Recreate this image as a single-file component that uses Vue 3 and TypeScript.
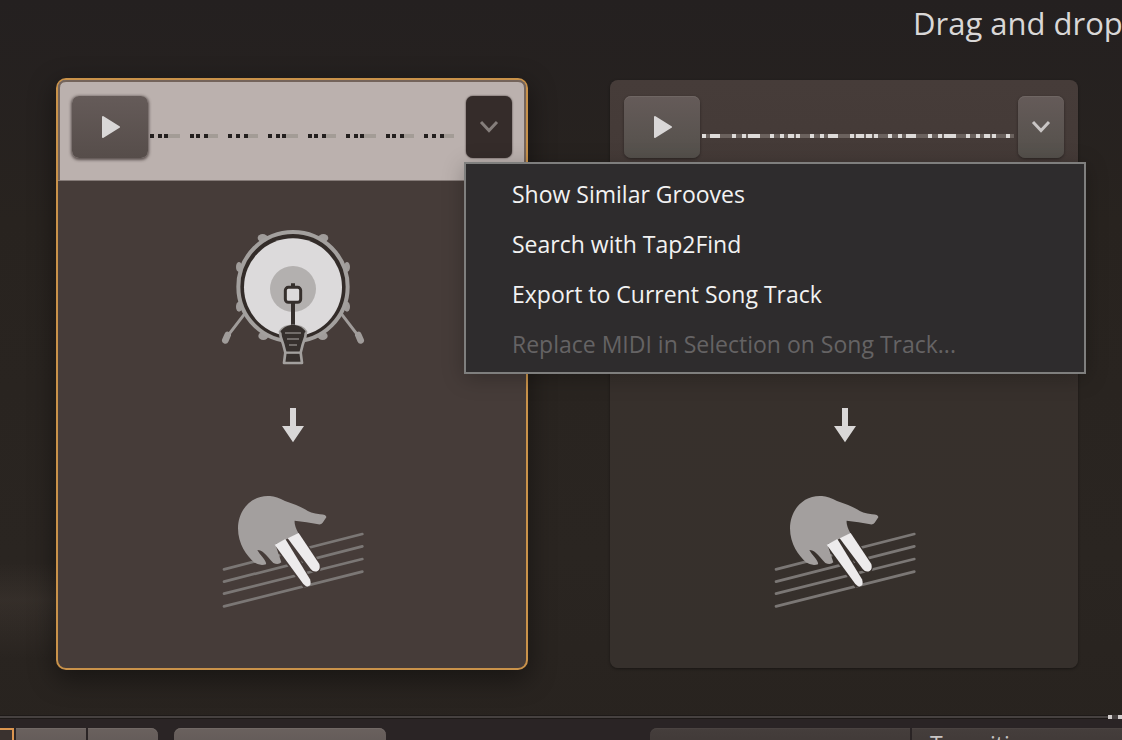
<script setup lang="ts">
import { ref } from 'vue'

type Span = [start: number, width: number]

interface Groove {
  id: string
  selected: boolean
  notes: Span[]
  tails: Span[]
}

const grooves: Groove[] = [
  {
    id: 'groove-1',
    selected: true,
    notes: [2, 10, 16, 42, 48, 56, 80, 88, 96, 120, 128, 134, 160, 166, 174, 198, 206, 212, 238, 244, 252, 276, 284, 292]
      .map((x): Span => [x, 4]),
    tails: [[20, 12], [60, 10], [100, 10], [138, 12], [178, 10], [216, 12], [256, 10], [296, 10]],
  },
  {
    id: 'groove-2',
    selected: false,
    notes: [
      [2, 4], [10, 10], [32, 4], [42, 4], [48, 12], [70, 4], [80, 4], [88, 6], [96, 4],
      [110, 4], [120, 4], [128, 10], [150, 4], [156, 8], [166, 6], [174, 4], [188, 4],
      [198, 4], [206, 10], [228, 4], [238, 4], [244, 12], [266, 4], [276, 4], [284, 6],
      [292, 4], [306, 4],
    ],
    tails: [[2, 312]],
  },
]

const openMenu = ref<string | null>('groove-1')

const menuItems = [
  { label: 'Show Similar Grooves', disabled: false },
  { label: 'Search with Tap2Find', disabled: false },
  { label: 'Export to Current Song Track', disabled: false },
  { label: 'Replace MIDI in Selection on Song Track...', disabled: true },
]

function toggleMenu(id: string) {
  openMenu.value = openMenu.value === id ? null : id
}
</script>

<template>
  <div class="app">
    <h1 class="hint">Drag and drop</h1>

    <main class="cards">
      <article v-for="g in grooves" :key="g.id" class="card" :class="{ selected: g.selected }">
        <header class="card-head">
          <button class="btn play" type="button" aria-label="Play">
            <svg width="20" height="24" viewBox="0 0 20 24">
              <path d="M3 2 L19 12 L3 22 Z" fill="#d9d7d7" stroke="#d9d7d7" stroke-width="2" stroke-linejoin="round" />
            </svg>
          </button>
          <svg class="notes" height="62">
            <rect v-for="(t, i) in g.tails" :key="'t' + i" class="tail" :x="t[0]" y="38" :width="t[1]" height="4" />
            <rect v-for="(n, i) in g.notes" :key="'n' + i" class="note" :x="n[0]" y="38" :width="n[1]" height="4" />
          </svg>
          <div class="menu-anchor">
            <button
              class="btn more"
              type="button"
              aria-label="Groove options"
              :aria-expanded="openMenu === g.id"
              :class="{ pressed: openMenu === g.id }"
              @click="toggleMenu(g.id)"
            >
              <svg width="22" height="14" viewBox="0 0 22 14">
                <path d="M3 2 L11 10.500 L19 2" fill="none" stroke="currentColor" stroke-width="3" />
              </svg>
            </button>
            <div v-if="openMenu === g.id" class="menu" role="menu">
              <button
                v-for="m in menuItems"
                :key="m.label"
                class="menu-item"
                type="button"
                role="menuitem"
                :disabled="m.disabled"
              >
                {{ m.label }}
              </button>
            </div>
          </div>
        </header>

        <div class="flow">
          <svg class="drum" width="170" height="155" viewBox="-9 0 510 465">
            <g fill="#a09c9a">
              <ellipse cx="158" cy="54" rx="15" ry="12" />
              <ellipse cx="340" cy="54" rx="15" ry="12" />
              <ellipse cx="87" cy="141" rx="9" ry="15" />
              <ellipse cx="411" cy="141" rx="9" ry="15" />
              <ellipse cx="87" cy="260" rx="9" ry="15" />
              <ellipse cx="411" cy="260" rx="9" ry="15" />
              <ellipse cx="160" cy="348" rx="15" ry="12" />
              <ellipse cx="338" cy="348" rx="15" ry="12" />
            </g>
            <g stroke="#a09c9a" stroke-linecap="round">
              <path d="M102 284 L56 344 M396 284 L442 344" stroke-width="9" />
              <path d="M53 345 L46 361 M445 345 L452 361" stroke-width="20" />
            </g>
            <circle cx="249" cy="200" r="158" fill="#332c29" />
            <circle cx="249" cy="200" r="164" fill="none" stroke="#a3a09e" stroke-width="12" />
            <circle cx="249" cy="202" r="147" fill="#dcdadb" />
            <circle cx="249" cy="207" r="69" fill="#b3b0af" />
            <path d="M249 190 V204 M249 248 V322" stroke="#36302d" stroke-width="12" />
            <rect x="226" y="202" width="46" height="45" rx="9" fill="#dcdadb" stroke="#36302d" stroke-width="9" />
            <path
              d="M210 335 C225 312 273 312 288 335 L286 350 Q277 374 272 398 L276 429 H222 L226 398 Q221 374 212 350 Z"
              fill="#36302d" stroke="#a3a09e" stroke-width="8" stroke-linejoin="round"
            />
            <path d="M211 336 C225 308 273 308 287 336 L270 344 H228 Z" fill="#36302d" />
            <path d="M226 398 H272" stroke="#a3a09e" stroke-width="7" />
            <path d="M225 339 H273 M231 357 H267 M237 375 H261" stroke="#85807e" stroke-width="5" />
          </svg>

          <svg class="arrow" width="170" height="50" viewBox="-9 0 510 150">
            <path d="M240 24 H258 V78 H282 L249 127 L216 78 H240 Z" fill="#d9d7d7" />
          </svg>

          <svg class="hand" width="170" height="140" viewBox="-9 240 510 420">
            <path
              d="M42 508 L457 402 M42 545 L457 439 M42 581 L457 477 M42 619 L457 515"
              stroke="#7b7775" stroke-width="8" stroke-linecap="round"
            />
            <g class="cutout">
              <path d="M194 433 L266 400 L327 494 Q330 512 316 516 L300 506 L240 430 L300 545 L282 557 Z" />
              <path d="M140 452 L168 492 L190 488 L150 448 Z" />
            </g>
            <path
              d="M180 288 C124 284 84 330 84 385 C84 432 110 467 132 487 Q150 499 168 493 C171 482 150 466 142 450 C158 450 166 463 190 489 Q205 496 214 487 L196 433 L266 401 Q252 376 254 362 Q290 365 325 373 Q334 374 338 368 L349 352 Q350 344 330 343 Q300 340 285 328 Q260 314 225 303 Q200 289 180 288 Z"
              fill="#a39f9e"
            />
            <path d="M194 434 L226 417 L300 538 Q304 551 300 556 Q290 564 280 552 Z" fill="#edebec" />
            <path d="M233 415 L266 399 L328 492 Q332 506 324 512 Q312 519 302 507 Z" fill="#edebec" />
          </svg>
        </div>
      </article>
    </main>

    <footer class="bottom">
      <div class="group tabs">
        <button class="seg active" type="button" aria-label="Tab 1"></button>
        <button class="seg" type="button" aria-label="Tab 2"></button>
        <button class="seg" type="button" aria-label="Tab 3"></button>
      </div>
      <button class="seg single" type="button" aria-label="Options"></button>
      <div class="group parts">
        <button class="seg dark first" type="button" aria-label="Part"></button>
        <button class="seg dark grow" type="button">Transitions</button>
      </div>
      <span class="ticks" aria-hidden="true"></span>
    </footer>
  </div>
</template>

<style>
body {
  margin: 0;
  background: #28231f;
}
</style>

<style scoped>
.app {
  box-sizing: border-box;
  height: 100vh;
  overflow: hidden;
  display: flex;
  flex-direction: column;
  font-family: "Open Sans", "Noto Sans", sans-serif;
  background:
    linear-gradient(180deg, transparent 76%, rgba(70, 61, 55, 0.4) 81%, transparent 89%) 0 0 / 58px 100% no-repeat,
    linear-gradient(180deg, #242020 0, #28231f 30%, #2a2521 75%, #28231f 100%);
}

.hint {
  flex: none;
  box-sizing: border-box;
  height: 80px;
  margin: 0;
  padding-left: 913px;
  font-size: 31px;
  line-height: 46px;
  font-weight: 400;
  white-space: nowrap;
  color: #d9d7d7;
}

.cards {
  flex: none;
  display: grid;
  grid-template-columns: 1fr 1fr;
  gap: 84px;
  padding: 0 44px 0 58px;
}

.card {
  --surface: #38312d;
  min-width: 0;
  border-radius: 8px;
  background: linear-gradient(180deg, #463c39 0, #443a37 16%, #37302c 52%, #36302c 100%);
  box-shadow: 0 1px 3px rgba(0, 0, 0, 0.4);
}

.card.selected {
  --surface: #463c39;
  position: relative;
  z-index: 1;
  background: #463c39;
  box-shadow: 0 0 0 2px #c9924a, 0 8px 26px 4px rgba(0, 0, 0, 0.4);
}

.card-head {
  box-sizing: border-box;
  height: 100px;
  display: flex;
  align-items: flex-start;
  padding: 16px 14px;
  border-radius: 8px 8px 0 0;
}

.selected .card-head {
  background: #bbb1ae;
  box-shadow: inset 2px 0 #74645b, inset -2px 0 #74645b, inset 0 2px #74645b, 0 1px #857b78;
}

.btn {
  flex: none;
  display: flex;
  align-items: center;
  justify-content: center;
  height: 62px;
  padding: 0;
  border: 0;
  border-radius: 7px;
  background: linear-gradient(180deg, #655b59, #54504b);
  box-shadow: inset 0 1px 0 #6f6663, 0 1px 3px rgba(0, 0, 0, 0.4);
}

.play {
  width: 76px;
}

.selected .play {
  background: linear-gradient(180deg, #655b59, #564d4a);
  box-shadow: 0 1px 3px 1px rgba(50, 40, 38, 0.7);
}

.more {
  width: 46px;
  color: #c9c5c4;
}

.more.pressed {
  color: #857e7b;
  background: #352c2a;
  box-shadow: 0 0 2px #352c2a;
}

.notes {
  flex: 1;
  min-width: 0;
}

.tail {
  fill: #6b625e;
}

.note {
  fill: #dedbd9;
}

.selected .tail {
  fill: #a39c96;
}

.selected .note {
  fill: #231f1e;
}

.menu-anchor {
  position: relative;
}

.menu {
  position: absolute;
  top: 66px;
  left: -2px;
  z-index: 5;
  box-sizing: border-box;
  width: 622px;
  padding: 5px 0 3px;
  border: 2px solid #7f7f7e;
  background: #2e2c2d;
  box-shadow: 0 4px 20px rgba(0, 0, 0, 0.25);
}

.menu-item {
  display: block;
  width: 100%;
  height: 50px;
  padding: 0 46px;
  border: 0;
  background: none;
  font-family: inherit;
  font-size: 23px;
  line-height: 50px;
  font-weight: 500;
  text-align: left;
  white-space: nowrap;
  color: #f2f2f2;
}

.menu-item:disabled {
  color: #656364;
}

.flow {
  display: flex;
  flex-direction: column;
  align-items: center;
  padding: 40px 0 48px;
}

.arrow {
  margin-top: 25px;
}

.hand {
  margin-top: 30px;
}

.cutout {
  fill: var(--surface);
  stroke: var(--surface);
  stroke-width: 10px;
}

.bottom {
  position: relative;
  flex: 1;
  display: flex;
  align-items: flex-start;
  margin-top: 48px;
  padding-top: 10px;
  border-top: 2px solid #464140;
  background: #2a2425;
  box-shadow: 0 -1px #1e1a18, inset 0 1px #1e1a18;
}

.group {
  display: flex;
  gap: 2px;
}

.seg {
  box-sizing: border-box;
  width: 70px;
  height: 32px;
  padding: 0;
  border: 0;
  background: linear-gradient(180deg, #6a615e 0, #5d5553 100%);
  box-shadow: inset 0 1px 0 #716966;
}

.tabs .seg:last-child {
  border-radius: 0 7px 0 0;
}

.seg.active {
  width: 14px;
  border: solid #dc9650;
  border-width: 2px 2px 0 0;
  background: #3a322f;
  box-shadow: none;
}

.single {
  width: 212px;
  margin-left: 16px;
  border-radius: 7px 7px 0 0;
}

.parts {
  flex: 1;
  margin-left: 264px;
}

.seg.dark {
  background: linear-gradient(180deg, #453e3c, #3c3533);
  box-shadow: inset 0 1px 0 #4a4341;
}

.seg.first {
  width: 260px;
  border-radius: 7px 0 0 0;
}

.seg.grow {
  flex: 1;
  padding: 0 18px;
  font-family: inherit;
  font-size: 23px;
  line-height: 32px;
  text-align: left;
  color: #c9c5c4;
}

.ticks {
  position: absolute;
  top: -3px;
  right: 0;
  width: 14px;
  height: 4px;
  background: repeating-linear-gradient(90deg, #d0cccb 0 4px, #464140 4px 10px);
}
</style>
